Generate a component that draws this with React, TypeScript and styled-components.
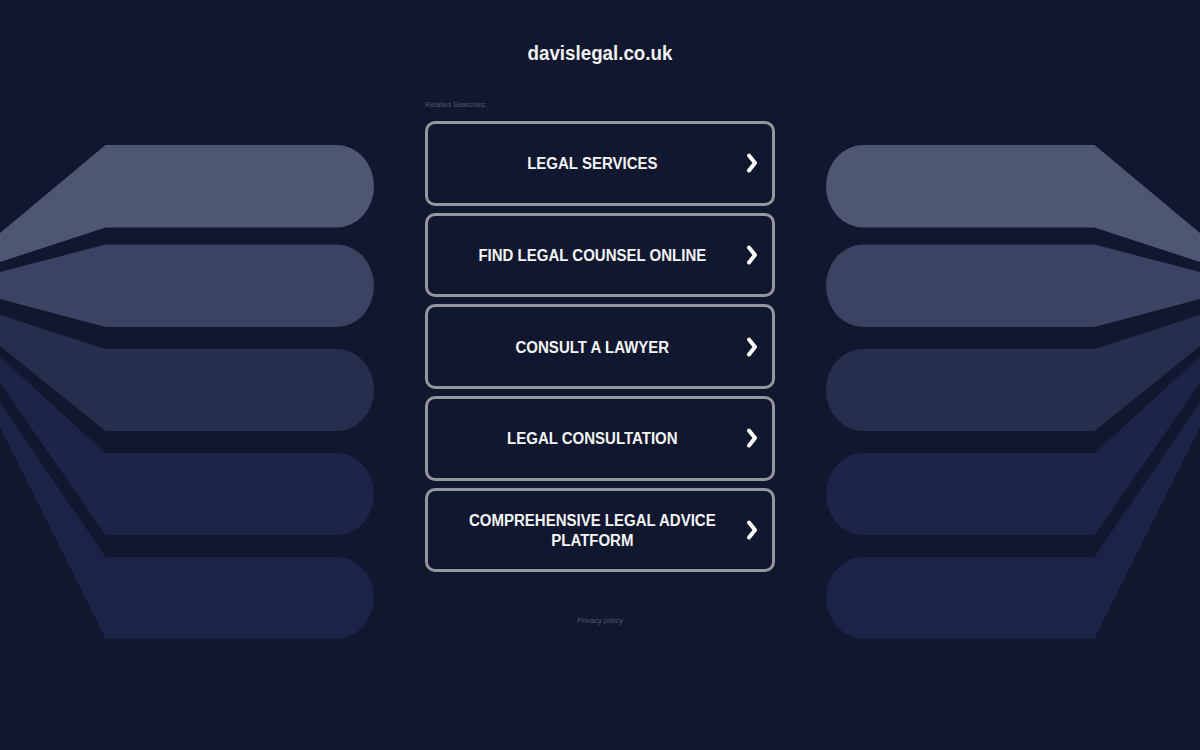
import React from 'react';
import styled, { createGlobalStyle } from 'styled-components';

const GlobalStyle = createGlobalStyle`
  html, body {
    margin: 0;
    padding: 0;
    background: #10172e;
  }
`;

const Page = styled.div`
  position: relative;
  width: 100%;
  height: 750px;
  overflow: hidden;
  background: #10172e;
  font-family: 'Liberation Sans', Arial, sans-serif;
`;

const Backdrop = styled.svg`
  position: absolute;
  top: 0;
  left: 0;
  width: 1200px;
  height: 750px;
`;

const Content = styled.main`
  position: relative;
  width: 350px;
  margin: 0 auto;
  display: flex;
  flex-direction: column;
`;

const Domain = styled.h1`
  margin: 0;
  padding-top: 42px;
  height: 23px;
  font-size: 20px;
  line-height: 23px;
  font-weight: 700;
  text-align: center;
  color: #f1f1f1;
  transform: scaleX(0.9375);
`;

const RelatedLabel = styled.div`
  margin-top: 35px;
  height: 10px;
  font-size: 8px;
  line-height: 10px;
  color: #565a70;
  transform: scaleX(0.9375);
  transform-origin: left center;
`;

const Links = styled.div`
  margin-top: 11px;
  display: flex;
  flex-direction: column;
  gap: 7px;
`;

const LinkButton = styled.a`
  box-sizing: border-box;
  height: 84.7px;
  display: flex;
  align-items: center;
  padding: 0 15px;
  border: 3px solid #95979c;
  border-radius: 10px;
  background: #10172e;
  color: #f4f4f4;
  cursor: pointer;
`;

const LinkText = styled.span`
  flex: 1;
  padding: 2px 5px 0 2px;
  font-size: 16px;
  line-height: 20px;
  font-weight: 700;
  text-align: center;
  transform: scaleX(0.9375);
`;

const Chevron = styled.svg`
  flex: none;
  width: 14px;
  height: 20px;
  margin-right: -1.5px;
`;

const Privacy = styled.a`
  margin-top: 44px;
  height: 10px;
  font-size: 8px;
  line-height: 10px;
  text-align: center;
  color: #565a70;
  transform: scaleX(0.9375);
`;

const bands = [
  { fill: '#4d5672', top: 145, bottom: 227.5, leftTop: 233, leftBottom: 262 },
  { fill: '#3a4361', top: 244.5, bottom: 327, leftTop: 272, leftBottom: 299 },
  { fill: '#262e4e', top: 349, bottom: 431, leftTop: 315, leftBottom: 346 },
  { fill: '#1c2547', top: 453, bottom: 535, leftTop: 357, leftBottom: 383 },
  { fill: '#1a2446', top: 557, bottom: 638.5, leftTop: 402, leftBottom: 427 },
];

const bandPath = (b: (typeof bands)[number]) =>
  `M0 ${b.leftTop}L105.5 ${b.top}H337A37 ${(b.bottom - b.top) / 2} 0 0 1 337 ${b.bottom}H105.5L0 ${b.leftBottom}Z`;

const searches = [
  'LEGAL SERVICES',
  'FIND LEGAL COUNSEL ONLINE',
  'CONSULT A LAWYER',
  'LEGAL CONSULTATION',
  'COMPREHENSIVE LEGAL ADVICE PLATFORM',
];

export default function App() {
  return (
    <Page>
      <GlobalStyle />
      <Backdrop viewBox="0 0 1200 750" aria-hidden="true">
        {bands.map((b) => (
          <path key={b.top} d={bandPath(b)} fill={b.fill} />
        ))}
        <g transform="matrix(-1 0 0 1 1200 0)">
          {bands.map((b) => (
            <path key={b.top} d={bandPath(b)} fill={b.fill} />
          ))}
        </g>
      </Backdrop>
      <Content>
        <Domain>davislegal.co.uk</Domain>
        <RelatedLabel>Related Searches:</RelatedLabel>
        <Links>
          {searches.map((text) => (
            <LinkButton key={text}>
              <LinkText>{text}</LinkText>
              <Chevron viewBox="0 0 14 20" aria-hidden="true">
                <path
                  d="M4 2.5L10 10L4 17.5"
                  fill="none"
                  stroke="#fff"
                  strokeWidth="4"
                  strokeLinecap="round"
                  strokeLinejoin="round"
                />
              </Chevron>
            </LinkButton>
          ))}
        </Links>
        <Privacy>Privacy policy</Privacy>
      </Content>
    </Page>
  );
}
